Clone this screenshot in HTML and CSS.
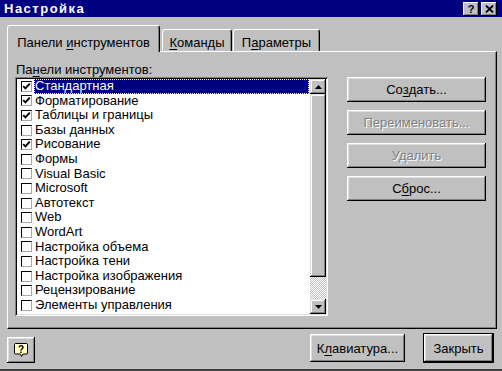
FILE: index.html
```html
<!DOCTYPE html>
<html lang="ru">
<head>
<meta charset="utf-8">
<title>Настройка</title>
<link rel="stylesheet" href="styles.css">
</head>
<body>
<div class="window">
  <div class="titlebar">
    <span class="title">Настройка</span>
    <div class="tb-buttons">
      <span class="tb-btn tb-help">?</span>
      <span class="tb-btn"><svg width="9" height="8" viewBox="0 0 9 8"><path d="M1 0.5 L8 7.5 M8 0.5 L1 7.5" stroke="#000" stroke-width="1.8"/></svg></span>
    </div>
  </div>
  <div class="main">
    <div class="tabs">
      <div class="tab tab-active">Панели <u>и</u>нструментов</div>
      <div class="tab tab-cmd"><u>К</u>оманды</div>
      <div class="tab tab-par">П<u>а</u>раметры</div>
    </div>
    <div class="panel">
      <div class="left">
        <div class="label">Па<u>н</u>ели инструментов:</div>
        <div class="listbox">
          <div class="items">
            <div class="row"><span class="cb on"></span><span class="txt sel">Стандартная</span></div>
            <div class="row"><span class="cb on"></span><span class="txt">Форматирование</span></div>
            <div class="row"><span class="cb on"></span><span class="txt">Таблицы и границы</span></div>
            <div class="row"><span class="cb"></span><span class="txt">Базы данных</span></div>
            <div class="row"><span class="cb on"></span><span class="txt">Рисование</span></div>
            <div class="row"><span class="cb"></span><span class="txt">Формы</span></div>
            <div class="row"><span class="cb"></span><span class="txt">Visual Basic</span></div>
            <div class="row"><span class="cb"></span><span class="txt">Microsoft</span></div>
            <div class="row"><span class="cb"></span><span class="txt">Автотекст</span></div>
            <div class="row"><span class="cb"></span><span class="txt">Web</span></div>
            <div class="row"><span class="cb"></span><span class="txt">WordArt</span></div>
            <div class="row"><span class="cb"></span><span class="txt">Настройка объема</span></div>
            <div class="row"><span class="cb"></span><span class="txt">Настройка тени</span></div>
            <div class="row"><span class="cb"></span><span class="txt">Настройка изображения</span></div>
            <div class="row"><span class="cb"></span><span class="txt">Рецензирование</span></div>
            <div class="row"><span class="cb"></span><span class="txt">Элементы управления</span></div>
          </div>
          <div class="scrollbar">
            <div class="sb-btn"><svg width="7" height="4" viewBox="0 0 7 4"><path d="M3.5 0 L7 4 L0 4 Z" fill="#000"/></svg></div>
            <div class="sb-thumb"></div>
            <div class="sb-track"></div>
            <div class="sb-btn"><svg width="7" height="4" viewBox="0 0 7 4"><path d="M0 0 L7 0 L3.5 4 Z" fill="#000"/></svg></div>
          </div>
        </div>
      </div>
      <div class="actions">
        <div class="btn">Со<u>з</u>дать...</div>
        <div class="btn disabled">Переименовать...</div>
        <div class="btn disabled">Удалить</div>
        <div class="btn">С<u>б</u>рос...</div>
      </div>
    </div>
    <div class="footer">
      <div class="btn btn-help"><svg width="18" height="18" viewBox="0 0 18 18"><path d="M3.5 2.5 H14.5 Q15.5 2.5 15.5 3.5 V12 Q15.5 13 14.5 13 H11 L9.5 15.5 L8.5 13 H3.5 Q2.5 13 2.5 12 V3.5 Q2.5 2.5 3.5 2.5 Z" fill="#ffffc8" stroke="#000" stroke-width="1"/><text x="9" y="11.5" text-anchor="middle" font-family="Liberation Sans, Arial, sans-serif" font-weight="bold" font-size="10" fill="#000">?</text></svg></div>
      <div class="spacer"></div>
      <div class="btn btn-kbd">К<u>л</u>авиатура...</div>
      <div class="btn btn-close">Закрыть</div>
    </div>
  </div>
</div>
</body>
</html>
```
FILE: styles.css
```css
* { box-sizing: border-box; }
html, body { margin: 0; padding: 0; }
body {
  width: 502px;
  height: 371px;
  overflow: hidden;
  background: #c0c0c0;
  font-family: "Liberation Sans", Arial, sans-serif;
  font-size: 13px;
  color: #000;
}
u { text-decoration: underline; text-underline-offset: 2px; }

.window {
  width: 502px;
  height: 371px;
  display: flex;
  flex-direction: column;
  background: #c0c0c0;
  border-bottom: 2px solid #404040;
}

.titlebar {
  height: 17px;
  flex: none;
  background: #000080;
  color: #fff;
  display: flex;
  align-items: center;
  justify-content: space-between;
  padding: 0 5px 0 4px;
}
.title { font-weight: bold; font-size: 13px; letter-spacing: 1.5px; }
.tb-buttons { display: flex; gap: 2px; }
.tb-btn {
  width: 16px;
  height: 14px;
  background: #c0c0c0;
  box-shadow: inset -1px -1px #000, inset 1px 1px #fff, inset -2px -2px #808080;
  display: flex;
  align-items: center;
  justify-content: center;
  color: #000;
}
.tb-help { font-weight: bold; font-size: 11px; line-height: 14px; }

.main {
  flex: 1;
  display: flex;
  flex-direction: column;
  padding: 8px 5px 0 7px;
}

.tabs {
  display: flex;
  align-items: flex-end;
  height: 27px;
  margin-bottom: -1px;
  position: relative;
  z-index: 1;
}
.tab {
  background: #c0c0c0;
  border-top: 1px solid #fff;
  border-left: 1px solid #fff;
  border-right: 1px solid #000;
  border-radius: 3px 3px 0 0;
  box-shadow: inset -1px 0 #808080;
  text-align: center;
  line-height: 15px;
  height: 22px;
  margin-bottom: 1px;
  padding-top: 5px;
}
.tab-active { width: 153px; height: 27px; margin-bottom: 0; padding-top: 9px; }
.tab-cmd { width: 70px; margin-left: 2px; }
.tab-par { width: 87px; margin-left: 1px; }

.panel {
  height: 278px;
  flex: none;
  border: 1px solid;
  border-color: #fff #000 #000 #fff;
  box-shadow: inset -1px -1px #808080;
  display: flex;
  padding: 10px 9px 0 7px;
}

.left { width: 313px; display: flex; flex-direction: column; }
.label { height: 15px; line-height: 15px; padding-left: 1px; }

.listbox {
  height: 239px;
  background: #fff;
  padding: 2px;
  display: flex;
  box-shadow: inset 1px 1px #808080, inset -1px -1px #fff, inset 2px 2px #000, inset -2px -2px #dfdfdf;
}
.items { flex: 1; }
.row {
  height: 14.6px;
  display: flex;
  align-items: center;
  padding-left: 4px;
}
.cb {
  width: 11px;
  height: 11px;
  flex: none;
  background: #fff;
  border-top: 1px solid #000;
  border-left: 1px solid #000;
  border-right: 1px solid #a8a8a8;
  border-bottom: 1px solid #a8a8a8;
}
.cb.on {
  background: #fff url("data:image/svg+xml,%3Csvg xmlns='http://www.w3.org/2000/svg' width='9' height='9' viewBox='0 0 9 9'%3E%3Cpath d='M1.2 4.2 L3.4 6.4 L7.8 1.6' fill='none' stroke='%23000' stroke-width='1.9'/%3E%3C/svg%3E") no-repeat center;
}
.txt {
  flex: 1;
  margin-left: 2px;
  margin-right: 1px;
  padding-left: 1px;
  line-height: 14.6px;
  white-space: nowrap;
}
.txt.sel {
  background: #000080;
  color: #fff;
  outline: 1px dotted #ffff80;
  outline-offset: -1px;
}

.scrollbar { width: 16px; display: flex; flex-direction: column; }
.sb-btn, .sb-thumb {
  background: #c0c0c0;
  box-shadow: inset -1px -1px #000, inset 1px 1px #dfdfdf, inset -2px -2px #808080, inset 2px 2px #fff;
}
.sb-btn { height: 15px; display: flex; align-items: center; justify-content: center; }
.sb-thumb { height: 183px; }
.sb-track {
  flex: 1;
  background: repeating-conic-gradient(#fff 0 25%, #c0c0c0 0 50%) 0 0 / 2px 2px;
}

.actions {
  margin-left: 19px;
  width: 139px;
  display: flex;
  flex-direction: column;
  gap: 8px;
  padding-top: 15px;
}
.btn {
  height: 25px;
  background: #c0c0c0;
  box-shadow: inset -1px -1px #000, inset 1px 1px #fff, inset -2px -2px #808080, inset 2px 2px #dfdfdf;
  display: flex;
  align-items: center;
  justify-content: center;
  white-space: nowrap;
}
.btn.disabled { color: #808080; text-shadow: 1px 1px #fff; }

.footer {
  flex: 1;
  display: flex;
  align-items: flex-end;
  padding-bottom: 6px;
}
.btn-help { width: 28px; height: 26px; }
.spacer { flex: 1; }
.btn-kbd { width: 95px; height: 28px; margin-bottom: 1px; }
.btn-close {
  width: 71px;
  height: 30px;
  margin-left: 18px;
  margin-right: 3px;
  border: 1px solid #000;
}
```
